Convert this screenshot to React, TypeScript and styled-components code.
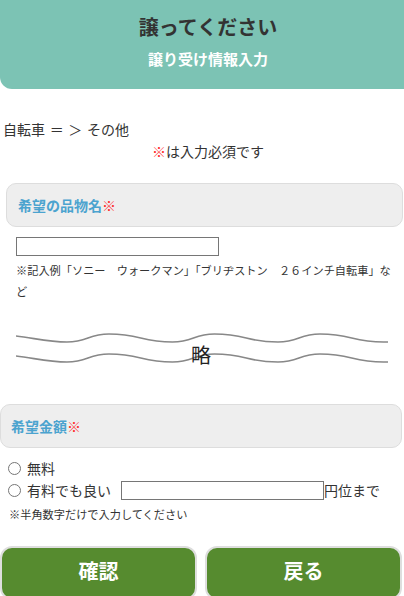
import React from "react";
import styled, { createGlobalStyle } from "styled-components";

const GlobalStyle = createGlobalStyle`
  html, body {
    margin: 0;
    padding: 0;
    overflow-x: hidden;
    background: #fff;
  }
  body {
    font-family: "Noto Sans CJK JP", "Noto Sans", sans-serif;
    color: #333;
  }
`;

const Page = styled.div`
  width: 416px;
  display: flex;
  flex-direction: column;
`;

const Header = styled.header`
  height: 89px;
  background: #7cc3b4;
  border-radius: 0 0 12px 12px;
  display: flex;
  flex-direction: column;
  align-items: center;
`;

const Title = styled.h1`
  margin: 13px 0 0;
  font-size: 20px;
  line-height: 28px;
  font-weight: 700;
  color: #333;
`;

const SubTitle = styled.h2`
  margin: 7px 0 0;
  font-size: 15px;
  line-height: 22px;
  font-weight: 700;
  color: #fff;
`;

const Crumb = styled.p`
  margin: 29px 0 0;
  padding-left: 3px;
  font-size: 14px;
  line-height: 22px;
  word-spacing: 1.5px;
`;

const Required = styled.p`
  margin: 0;
  text-align: center;
  font-size: 14px;
  line-height: 22px;
`;

const Mark = styled.span`
  color: #ff2a2a;
  font-weight: 400;
`;

const FieldLabel = styled.div<{ $left: number; $right: number; $top: number; $pad: number }>`
  box-sizing: border-box;
  height: 44px;
  margin: ${(p) => p.$top}px ${(p) => p.$right}px 0 ${(p) => p.$left}px;
  padding-left: ${(p) => p.$pad}px;
  display: flex;
  align-items: center;
  background: #eeeeee;
  border: 1px solid #dddddd;
  border-radius: 10px;
  color: #4ba3cf;
  font-size: 14px;
  font-weight: 700;
`;

const TextInput = styled.input<{ $w: number }>`
  box-sizing: border-box;
  width: ${(p) => p.$w}px;
  height: 19px;
  border: 1px solid #767676;
  padding: 0 2px;
  margin: 0;
  background: #fff;
  font-size: 12px;
`;

const ItemInput = styled(TextInput)`
  margin: 10px 0 0 16px;
`;

const Note = styled.p<{ $left: number; $top: number; $lh: number }>`
  margin: ${(p) => p.$top}px 0 0;
  padding: 0 16px 0 ${(p) => p.$left}px;
  font-size: 11.2px;
  line-height: ${(p) => p.$lh}px;
`;

const Omit = styled.div`
  position: relative;
  margin: 30px 0 0 16px;
  width: 372px;
  height: 34px;
`;

const OmitText = styled.span`
  position: absolute;
  left: 175px;
  top: 11px;
  font-size: 20px;
  line-height: 24px;
  color: #222;
`;

const Choices = styled.div`
  margin-top: 9px;
  display: flex;
  flex-direction: column;
`;

const Choice = styled.label`
  height: 22px;
  padding-left: 3px;
  display: flex;
  align-items: center;
  font-size: 14px;
`;

const Radio = styled.input`
  width: 13px;
  height: 13px;
  margin: 0 6px 0 5px;
`;

const PriceInput = styled(TextInput)`
  margin-left: 10px;
`;

const Buttons = styled.div`
  margin-top: 22px;
  width: 402px;
  display: grid;
  grid-template-columns: 1fr 1fr;
  gap: 8px;
`;

const Button = styled.button`
  box-sizing: border-box;
  height: 54px;
  background: #568b2f;
  border: 2px solid #dedede;
  border-radius: 12px;
  color: #fff;
  font-family: inherit;
  font-size: 20px;
  font-weight: 700;
  padding: 0 0 6px;
`;

// one wavy rule: valleys every 105.5px, drawn as smooth cubic segments
const wavePath = (y0: number) => {
  const hi = y0;
  const lo = y0 + 8;
  const valleys = [51, 156.5, 262, 367.5];
  const rise = 42;
  let d = `M0 ${y0 + 2} C18 ${y0 + 4}, 32 ${lo}, ${valleys[0]} ${lo}`;
  for (let i = 0; i < 3; i++) {
    const v = valleys[i];
    const pk = v + rise;
    const nv = valleys[i + 1];
    d += ` C${v + rise / 2} ${lo}, ${pk - rise / 2} ${hi}, ${pk} ${hi}`;
    d += ` C${pk + (nv - pk) / 2} ${hi}, ${nv - (nv - pk) / 2} ${lo}, ${nv} ${lo}`;
  }
  d += ` L372 ${lo}`;
  return d;
};

const Wave = () => (
  <svg width="372" height="34" viewBox="0 0 372 34">
    <path d={wavePath(2)} fill="none" stroke="#888" strokeWidth="1.6" />
    <path d={wavePath(22)} fill="none" stroke="#888" strokeWidth="1.6" />
  </svg>
);

export default function App() {
  return (
    <>
      <GlobalStyle />
      <Page>
        <Header>
          <Title>譲ってください</Title>
          <SubTitle>譲り受け情報入力</SubTitle>
        </Header>

        <Crumb>自転車 ＝ ＞ その他</Crumb>
        <Required>
          <Mark>※</Mark>は入力必須です
        </Required>

        <FieldLabel $left={6} $right={13} $top={21} $pad={11}>
          希望の品物名<Mark>※</Mark>
        </FieldLabel>
        <ItemInput type="text" $w={203} />
        <Note $left={16} $top={4} $lh={21}>
          ※記入例「ソニー　ウォークマン」「ブリヂストン　２６インチ自転車」など
        </Note>

        <Omit>
          <Wave />
          <OmitText>略</OmitText>
        </Omit>

        <FieldLabel $left={0} $right={14} $top={38} $pad={10}>
          希望金額<Mark>※</Mark>
        </FieldLabel>
        <Choices>
          <Choice>
            <Radio type="radio" name="price" />
            無料
          </Choice>
          <Choice>
            <Radio type="radio" name="price" />
            有料でも良い
            <PriceInput type="text" $w={203} />
            円位まで
          </Choice>
        </Choices>
        <Note $left={9} $top={3} $lh={20}>
          ※半角数字だけで入力してください
        </Note>

        <Buttons>
          <Button type="button">確認</Button>
          <Button type="button">戻る</Button>
        </Buttons>
      </Page>
    </>
  );
}
